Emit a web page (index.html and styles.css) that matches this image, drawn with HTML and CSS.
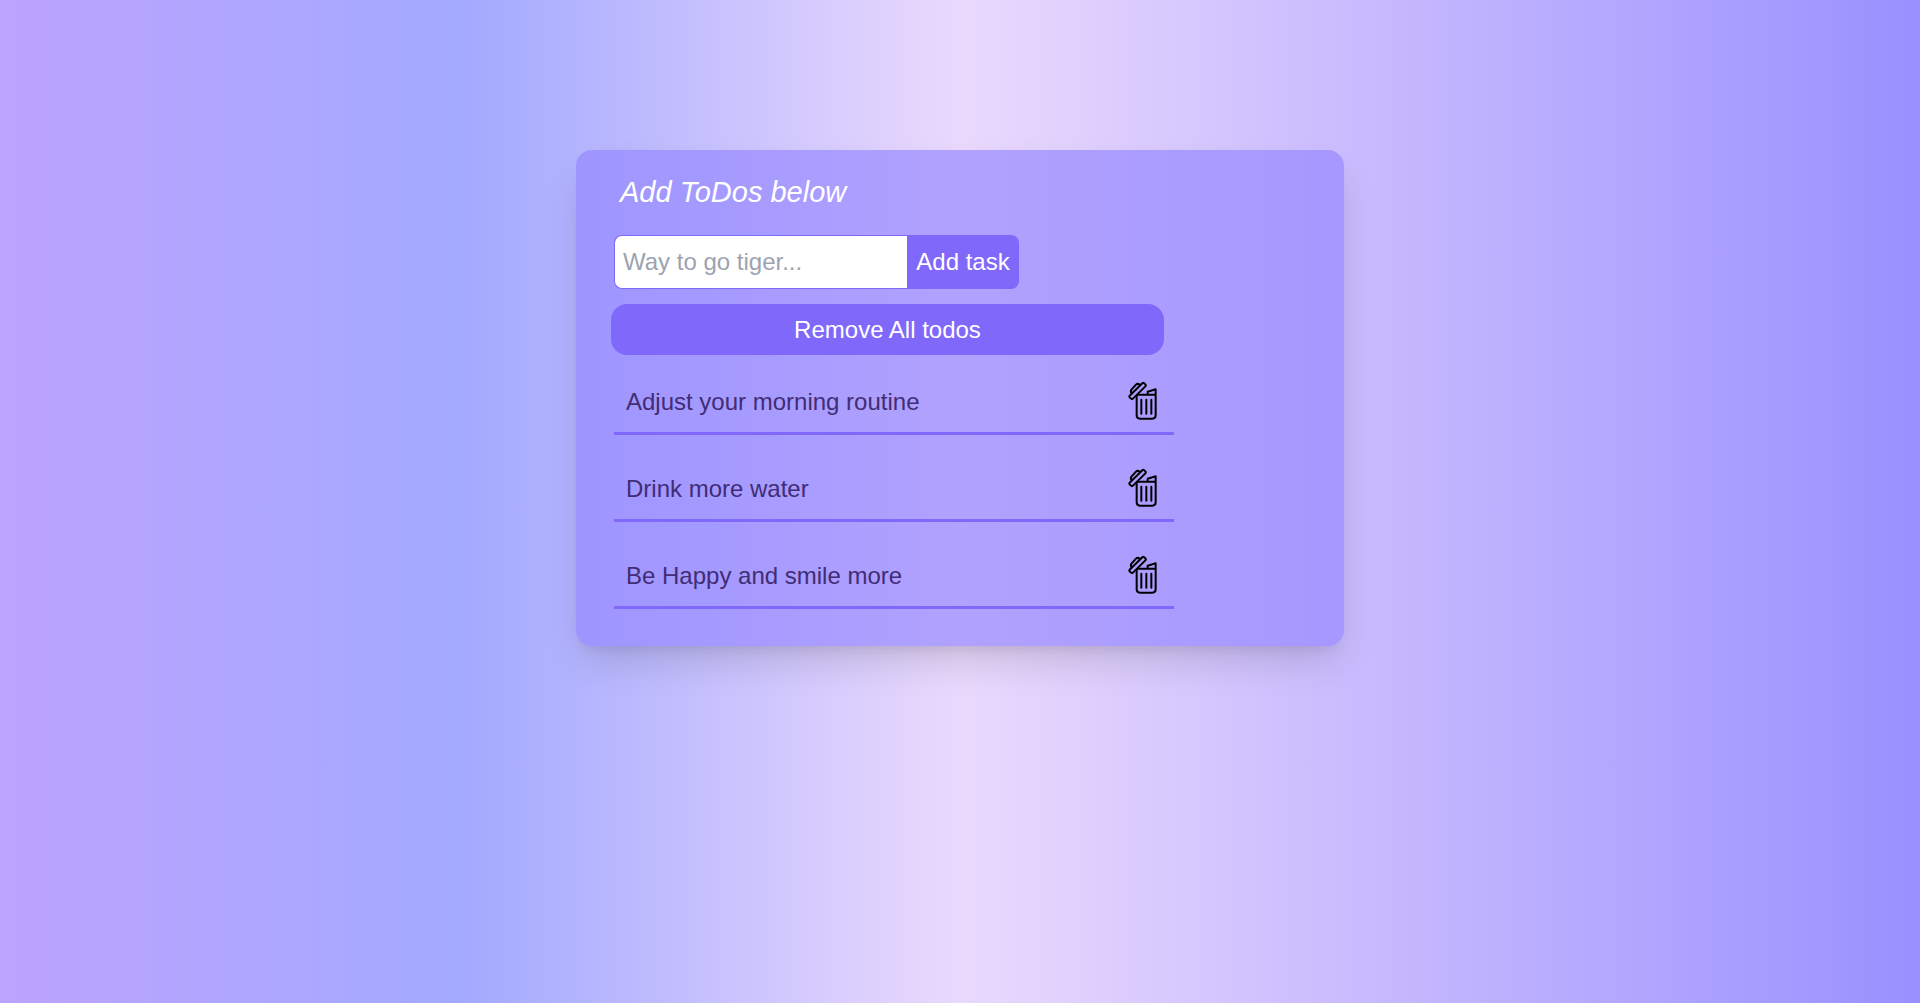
FILE: index.html
```html
<!DOCTYPE html>
<html lang="en">
<head>
<meta charset="utf-8">
<meta name="viewport" content="width=device-width, initial-scale=1">
<title>ToDos</title>
<link rel="stylesheet" href="styles.css">
</head>
<body>
<svg class="sprite" aria-hidden="true">
  <symbol id="trash" viewBox="55 34 90 117">
    <g fill="none" stroke="#000" stroke-width="6" stroke-linecap="round" stroke-linejoin="round">
      <path d="M81 78V137Q81 147 91 147H128Q138 147 138 137V59L114 66V75M84 75H138"/>
      <path d="M95 90V132M110 90V132M125 90V132"/>
      <path d="M60 78L98 41Q101 38 104 41L107 44Q110 47 107 50L70 87Q67 90 64 87L60 83Q58 80 60 78Z"/>
      <path d="M66 71Q61 65 66 59L79 45Q84 40 91 46"/>
    </g>
  </symbol>
</svg>
<main class="card">
  <h1 class="title">Add ToDos below</h1>
  <form class="add-form">
    <input class="task-input" type="text" placeholder="Way to go tiger..." aria-label="New task">
    <button class="add-button" type="button">Add task</button>
  </form>
  <button class="remove-all" type="button">Remove All todos</button>
  <ul class="todos">
    <li class="todo"><span>Adjust your morning routine</span><button class="delete" type="button" aria-label="Delete"><svg class="icon"><use href="#trash"/></svg></button></li>
    <li class="todo"><span>Drink more water</span><button class="delete" type="button" aria-label="Delete"><svg class="icon"><use href="#trash"/></svg></button></li>
    <li class="todo"><span>Be Happy and smile more</span><button class="delete" type="button" aria-label="Delete"><svg class="icon"><use href="#trash"/></svg></button></li>
  </ul>
</main>
</body>
</html>
```
FILE: styles.css
```css
* {
  box-sizing: border-box;
}

body {
  margin: 0;
  min-height: 100vh;
  padding-top: 150px;
  background: linear-gradient(90deg, #bca3ff 0%, #a3a9ff 24%, #ead9fd 50%, #9990ff 100%);
  font-family: "Liberation Sans", Arial, sans-serif;
  font-size: 24px;
  line-height: 32px;
}

button,
input {
  margin: 0;
  font: inherit;
}

button {
  border: 0;
  cursor: pointer;
}

.sprite {
  position: absolute;
  width: 0;
  height: 0;
}

.card {
  width: 40%;
  margin: 0 auto;
  padding: 24px 38px 37px;
  border-radius: 16px;
  background: rgba(146, 132, 255, 0.65);
  box-shadow: 0 20px 40px -8px rgba(0, 0, 0, 0.16), 0 8px 12px -6px rgba(0, 0, 0, 0.08);
}

.title {
  margin: 0 0 25px;
  padding-left: 6px;
  color: #fff;
  font-size: 29px;
  font-style: italic;
  font-weight: 400;
  line-height: 36px;
}

.add-form {
  display: flex;
  height: 54px;
}

.task-input {
  width: 293px;
  padding: 0 8px;
  border: 1px solid #8069fa;
  border-right: 0;
  border-radius: 8px 0 0 8px;
  background: #fff;
  color: #412c76;
}

.task-input::placeholder {
  color: #9ca3af;
  opacity: 1;
}

.add-button {
  width: 112px;
  padding: 0 9px;
  border-radius: 0 8px 8px 0;
  background: #8069fa;
  color: #fff;
}

.remove-all {
  display: block;
  width: 80%;
  max-width: 553px;
  height: 51px;
  margin: 15px 0 0 -3px;
  border-radius: 16px;
  background: #8069fa;
  color: #fff;
}

.todos {
  max-width: 560px;
  margin: 16px 0 0;
  padding: 0;
  display: grid;
  gap: 23px;
  list-style: none;
}

.todo {
  display: flex;
  align-items: center;
  justify-content: space-between;
  height: 64px;
  padding: 0 16px 0 12px;
  border-bottom: 3px solid #8069fa;
  color: #412c76;
}

.delete {
  display: flex;
  padding: 0 0 2px;
  background: none;
}

.icon {
  width: 30px;
  height: 39px;
}
```
